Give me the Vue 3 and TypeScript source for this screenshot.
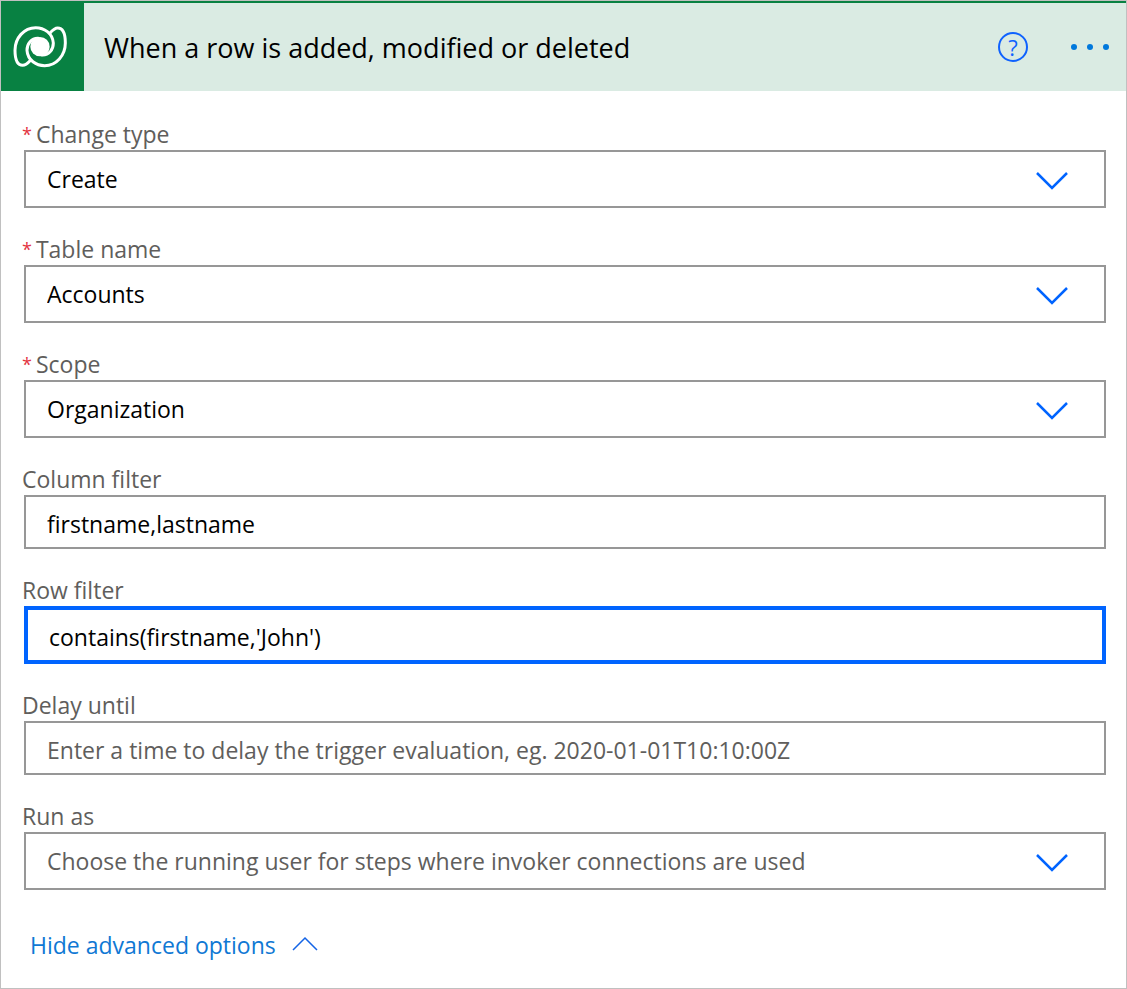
<script setup lang="ts">
import { reactive, ref } from 'vue'

interface Field {
  id: string
  label: string
  kind: 'select' | 'text'
  required?: boolean
  active?: boolean
  placeholder?: string
  options?: string[]
}

const fields: Field[] = [
  { id: 'change-type', label: 'Change type', kind: 'select', required: true, options: ['Create'] },
  { id: 'table-name', label: 'Table name', kind: 'select', required: true, options: ['Accounts'] },
  { id: 'scope', label: 'Scope', kind: 'select', required: true, options: ['Organization'] },
  { id: 'column-filter', label: 'Column filter', kind: 'text' },
  { id: 'row-filter', label: 'Row filter', kind: 'text', active: true },
  {
    id: 'delay-until',
    label: 'Delay until',
    kind: 'text',
    placeholder: 'Enter a time to delay the trigger evaluation, eg. 2020-01-01T10:10:00Z',
  },
  {
    id: 'run-as',
    label: 'Run as',
    kind: 'select',
    placeholder: 'Choose the running user for steps where invoker connections are used',
    options: [],
  },
]

const values = reactive<Record<string, string>>({
  'change-type': 'Create',
  'table-name': 'Accounts',
  scope: 'Organization',
  'column-filter': 'firstname,lastname',
  'row-filter': "contains(firstname,'John')",
  'delay-until': '',
  'run-as': '',
})

const title = ref('When a row is added, modified or deleted')
</script>

<template>
  <main class="card">
    <header class="header">
      <div class="brand">
        <svg class="logo" viewBox="36 76 168 132" aria-hidden="true">
          <g id="leaf" fill="none" stroke="#fff" stroke-width="9" stroke-linecap="round" stroke-linejoin="round">
            <path d="M126 166C147 167 160 150 160 130C158 100 132 84 107 84C72 84 45 115 45 152C45 182 53 197 68 197C78 197 84 190 92 181" />
          </g>
          <use href="#leaf" transform="rotate(180 120.5 141)" />
          <circle cx="120" cy="141" r="29" fill="#fff" />
        </svg>
      </div>
      <h1 class="title">{{ title }}</h1>
      <button class="help" type="button" aria-label="Help">?</button>
      <button class="more" type="button" aria-label="More options">
        <span class="dot"></span><span class="dot"></span><span class="dot"></span>
      </button>
    </header>

    <form class="form" @submit.prevent>
      <div v-for="field in fields" :key="field.id" class="field">
        <label class="label" :for="field.id">
          <span v-if="field.required" class="star">*</span>{{ field.label }}
        </label>
        <div v-if="field.kind === 'select'" class="picker">
          <select
            :id="field.id"
            v-model="values[field.id]"
            class="control select"
            :class="{ empty: !values[field.id] }"
          >
            <option v-if="field.placeholder" value="" disabled>{{ field.placeholder }}</option>
            <option v-for="option in field.options" :key="option" :value="option">{{ option }}</option>
          </select>
          <svg class="chevron" viewBox="0 0 34 20" aria-hidden="true">
            <path d="M2 2L17 17L32 2" fill="none" stroke="#0064ff" stroke-width="2.500" />
          </svg>
        </div>
        <input
          v-else
          :id="field.id"
          v-model="values[field.id]"
          class="control"
          :class="{ active: field.active }"
          type="text"
          :placeholder="field.placeholder"
          spellcheck="false"
        />
      </div>

      <button class="toggle" type="button">
        Hide advanced options
        <svg class="caret" viewBox="0 0 26 18" aria-hidden="true">
          <path d="M1 14L13 2L25 14" fill="none" stroke="#1464e6" stroke-width="1.500" />
        </svg>
      </button>
    </form>
  </main>
</template>

<style>
body {
  margin: 0;
}
</style>

<style scoped>
.card {
  box-sizing: border-box;
  min-height: 100vh;
  border: 1px solid #c0c0c0;
  background: #fff;
  color: #000;
  font-family: "Open Sans", "Noto Sans", sans-serif;
  font-size: 23px;
}

.header {
  display: flex;
  align-items: center;
  height: 88px;
  padding-right: 13px;
  border-top: 2px solid #088142;
  background: #daebe3;
}

.brand {
  display: flex;
  align-items: center;
  justify-content: center;
  align-self: stretch;
  flex: none;
  width: 83px;
  margin-right: 20px;
  background: #088142;
}

.logo {
  width: 56px;
  height: 44px;
  margin-right: 5px;
}

.title {
  flex: 1;
  margin: 0;
  padding-top: 2px;
  font-size: 27px;
  font-weight: 400;
  line-height: 36px;
}

.help {
  box-sizing: border-box;
  width: 30px;
  height: 30px;
  margin-right: 39px;
  padding: 0;
  border: 2px solid #0f62fe;
  border-radius: 50%;
  background: none;
  color: #0f62fe;
  font: 400 22px/26px "Open Sans", sans-serif;
  text-align: center;
}

.more {
  display: flex;
  justify-content: space-between;
  width: 46px;
  padding: 4px;
  border: 0;
  background: none;
}

.dot {
  width: 6px;
  height: 6px;
  border-radius: 50%;
  background: #0078dc;
}

.form {
  display: flex;
  flex-direction: column;
  gap: 27px;
  padding: 29px 20px 24px 23px;
}

.label {
  display: block;
  height: 30px;
  margin-left: -2px;
  color: #605e5c;
  line-height: 28px;
}

.star {
  margin-right: 4px;
  color: #e3343f;
  font-size: 18px;
  line-height: 18px;
  vertical-align: 2px;
}

.picker {
  position: relative;
}

.control {
  display: block;
  box-sizing: border-box;
  width: 100%;
  height: 54px;
  margin: 0;
  padding: 3px 21px 0;
  border: 2px solid #979797;
  border-radius: 0;
  outline: 0;
  background: #fff;
  color: #000;
  font: inherit;
}

.control::placeholder {
  color: #605e5c;
  opacity: 1;
}

.select {
  height: 58px;
  padding-top: 0;
  padding-right: 80px;
  appearance: none;
}

.empty {
  color: #605e5c;
}

.active {
  height: 58px;
  border: 4px solid #0064ff;
}

.chevron {
  position: absolute;
  top: 21px;
  right: 37px;
  width: 34px;
  height: 20px;
  pointer-events: none;
}

.toggle {
  display: flex;
  align-items: center;
  align-self: flex-start;
  gap: 16px;
  margin-top: 11px;
  padding: 0 6px;
  border: 0;
  background: none;
  color: #0f78d4;
  font: inherit;
  line-height: 34px;
}

.caret {
  width: 26px;
  height: 18px;
}
</style>
